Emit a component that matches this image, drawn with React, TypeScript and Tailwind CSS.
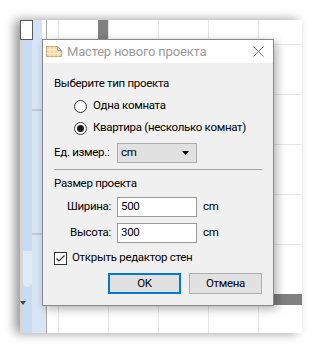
import React from "react";

const font = "font-['Roboto',sans-serif]";

function TitleIcon() {
  return (
    <svg width="16" height="11" viewBox="0 0 16 11">
      <path d="M0.5 0.5 H11.5 L15.5 4.5 V10.5 H0.5 Z" fill="#f7d29a" stroke="#c9a46e" />
      <path d="M4 0.5 V10.5 M8 0.5 V10.5 M12 4.5 V10.5 M0.5 4 H15.5 M0.5 7.5 H15.5" stroke="#fff3e0" strokeWidth="1" />
      <path d="M11.5 0.5 V4.5 H15.5 Z" fill="#e2e2e2" stroke="#9a9a9a" />
    </svg>
  );
}

function CloseX() {
  return (
    <svg width="11" height="11" viewBox="0 0 11 11">
      <path d="M0.5 0.5 L10.5 10.5 M10.5 0.5 L0.5 10.5" stroke="#707070" strokeWidth="1" />
    </svg>
  );
}

function Radio({ checked }: { checked?: boolean }) {
  return (
    <span className="shrink-0 w-[13px] h-[13px] rounded-full border border-[#333] bg-white flex items-center justify-center">
      {checked && <span className="w-[7px] h-[7px] rounded-full bg-[#1a1a1a]" />}
    </span>
  );
}

function GridCanvas() {
  // floor plan canvas behind the dialog
  const xs = [11, 61, 111, 161, 211];
  const ys = [24, 74, 124, 174, 224, 274];
  return (
    <svg width="256" height="313" viewBox="0 0 256 313" className="block">
      <rect width="256" height="313" fill="#fff" />
      {xs.map((x) => (
        <line key={"v" + x} x1={x + 0.5} y1="0" x2={x + 0.5} y2="313" stroke="#e6e6e6" />
      ))}
      {ys.map((y) => (
        <line key={"h" + y} x1="0" y1={y + 0.5} x2="256" y2={y + 0.5} stroke="#e6e6e6" />
      ))}
      <rect x="51" y="0" width="10" height="285" fill="#808080" />
      <rect x="51" y="274" width="205" height="11" fill="#808080" />
    </svg>
  );
}

export default function App() {
  return (
    <div className={`w-[322px] h-[352px] bg-white pt-[20px] pl-[20px] ${font}`}>
      <div className="relative w-[282px] h-[313px] flex shadow-[-5px_0px_10px_rgba(0,0,0,0.42)] overflow-hidden">

        {/* left tool strip */}
        <div className="relative w-[26px] flex flex-col">
          <div className="h-[20px] flex">
            <div className="w-[13px] border border-[#5a5a5a] bg-white" />
            <div className="w-[9px] bg-[#d3e2f6]" />
            <div className="w-[4px] bg-white" />
          </div>
          <div className="flex-1 flex">
            <div className="w-[3px] bg-[#d6d6d6]" />
            <div className="w-[9px] bg-[#c8dbf5] flex flex-col pt-[211px]">
              <div className="h-[36px] bg-[#dfe9f8] rounded-b-[6px]" />
            </div>
            <div className="w-[10px] bg-[#d8e5f7] flex flex-col pt-[69px]">
              <div className="h-[2px] bg-[#c4c9d2]" />
              <div className="mt-[122px] h-[2px] bg-[#c4c9d2]" />
            </div>
            <div className="w-[4px] bg-[#dbe6f5]" />
          </div>
          <svg className="absolute left-[0px] top-[281px]" width="6" height="4" viewBox="0 0 6 4">
            <path d="M0 0 H6 L3 4 Z" fill="#444" />
          </svg>
        </div>

        {/* canvas */}
        <div className="flex-1 border-l border-[#a8a8a8]">
          <GridCanvas />
        </div>

        {/* dialog */}
        <div className="absolute left-[22px] top-[19px] w-[232px] h-[267px] border border-[#888] bg-[#f0f0f0] flex flex-col shadow-[3px_3px_9px_rgba(0,0,0,0.3)] whitespace-nowrap">
          <div className="h-[23px] bg-white flex items-center pl-[3px] pr-[9px]">
            <TitleIcon />
            <span className="ml-[5px] text-[13px] tracking-[-0.2px] text-[#9a9a9a] leading-none">Мастер нового проекта</span>
            <span className="ml-auto flex"><CloseX /></span>
          </div>

          <div className="flex-1 flex flex-col pl-[11px] pr-[11px] pt-[12px] text-[11.5px] tracking-[-0.3px] text-black">
            <div className="h-[17px] flex items-center">Выберите тип проекта</div>

            <div className="mt-[3px] h-[22px] flex items-center pl-[20px] gap-[6px]">
              <Radio />
              <span>Одна комната</span>
            </div>
            <div className="h-[22px] flex items-center pl-[20px] gap-[6px]">
              <Radio checked />
              <span>Квартира (несколько комнат)</span>
            </div>

            <div className="mt-[4px] h-[20px] flex items-center">
              <span className="w-[63px] shrink-0">Ед. измер.:</span>
              <div className="w-[80px] h-[20px] border border-[#adadad] bg-[#e1e1e1] flex items-center pl-[3px] pr-[7px]">
                <span>cm</span>
                <svg className="ml-auto" width="7" height="4" viewBox="0 0 7 4">
                  <path d="M0 0 H7 L3.5 4 Z" fill="#000" />
                </svg>
              </div>
            </div>

            <div className="mt-[6px] h-px bg-[#a0a0a0]" />

            <div className="mt-[6px] h-[16px] flex items-center">Размер проекта</div>

            <div className="mt-[5px] h-[20px] flex items-center">
              <span className="w-[57px] shrink-0 text-right">Ширина:</span>
              <div className="ml-[6px] w-[80px] h-[20px] border border-[#9a9a9a] bg-white flex items-center pl-[3px]">500</div>
              <span className="ml-[6px]">cm</span>
            </div>
            <div className="mt-[6px] h-[20px] flex items-center">
              <span className="w-[57px] shrink-0 text-right">Высота:</span>
              <div className="ml-[6px] w-[80px] h-[20px] border border-[#9a9a9a] bg-white flex items-center pl-[3px]">300</div>
              <span className="ml-[6px]">cm</span>
            </div>

            <div className="mt-[7px] h-[16px] flex items-center gap-[5px]">
              <span className="w-[13px] h-[13px] border border-[#333] bg-white flex items-center justify-center">
                <svg width="9" height="7" viewBox="0 0 9 7">
                  <path d="M0.5 3.5 L3 6 L8.5 0.5" stroke="#333" strokeWidth="1.2" fill="none" />
                </svg>
              </span>
              <span>Открыть редактор стен</span>
            </div>

            <div className="mt-[7px] flex justify-end gap-[8px]">
              <button className="w-[73px] h-[21px] border-2 border-[#0078d7] bg-[#e1e1e1] text-[11.5px] leading-none">OK</button>
              <button className="w-[73px] h-[21px] border border-[#adadad] bg-[#e1e1e1] text-[11.5px] leading-none">Отмена</button>
            </div>
          </div>
        </div>

      </div>
    </div>
  );
}
